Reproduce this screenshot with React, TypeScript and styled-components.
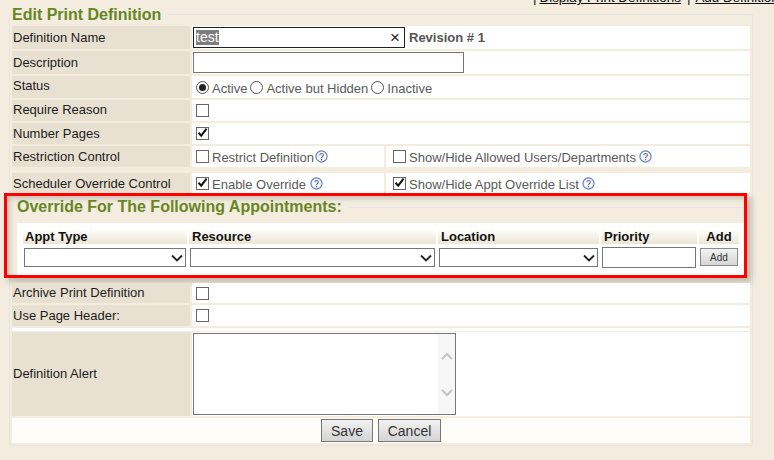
import React from "react";
import styled, { createGlobalStyle } from "styled-components";

const Global = createGlobalStyle`
  html, body { margin: 0; padding: 0; background: #f3ecdf; }
  body { font-family: "Liberation Sans", Arial, sans-serif; font-size: 13px; color: #222; overflow: hidden; }
`;
const Page = styled.div`width: 774px; height: 460px; overflow: hidden;`;
const TopLinks = styled.div`
  height: 14px; display: flex; align-items: flex-end; white-space: nowrap; overflow: hidden;
  padding-left: 533px; font-size: 13.4px; line-height: 14px; color: #111; gap: 1px;
  & > span { position: relative; top: -9px; }
`;
const TopSep = styled.span`margin-right: 2px;`;
const TopLink = styled.span<{ $lead?: number }>`text-decoration: underline; margin: 0 5px 0 ${p => p.$lead ?? 0}px;`;
const Fieldset = styled.div`
  position: relative;
  width: 744px; height: 432px; box-sizing: border-box; margin-left: 9px;
  border: 1px solid #e6e5e0; border-radius: 2px; padding: 11px 2px 0 2px;
`;
const Legend = styled.h1`
  position: absolute; top: -9px; left: 1px; margin: 0; padding: 0 7px 0 1px; background: #f3ecdf;
  font-size: 16px; line-height: 18px; font-weight: bold; color: #66861f;
`;
const Row = styled.div<{ $h: number; $gap?: number }>`
  display: grid; grid-template-columns: 178px 558px; column-gap: 2px;
  height: ${p => p.$h}px; margin-bottom: ${p => p.$gap ?? 2}px;
`;
const Label = styled.div<{ $lift?: number }>`
  background: #e8e1d2; display: flex; align-items: center; padding-left: 1px;
  font-size: 13px; color: #1c1c1c; padding-bottom: ${p => p.$lift ?? 0}px; box-sizing: border-box;
`;
const Value = styled.div`
  background: #fff; display: flex; align-items: center; padding-left: 4px; color: #555; box-sizing: border-box; white-space: nowrap;
`;
const SplitValue = styled.div`
  display: grid; grid-template-columns: 192px 364px; column-gap: 2px;
`;
const SplitCell = styled(Value)<{ $inset?: number }>`padding-left: ${p => p.$inset ?? 4}px;`;
const TextBox = styled.div<{ $w: number; $dark?: boolean }>`
  width: ${p => p.$w}px; height: 21px; box-sizing: border-box; background: #fff;
  border: 1px solid ${p => (p.$dark ? "#222" : "#767676")};
  display: flex; align-items: center; justify-content: space-between; padding: 0 4px 0 2px; margin-left: -3px;
`;
const Selected = styled.span`background: #7d7d7d; color: #fff; line-height: 15px; height: 15px; font-size: 14px;`;
const Clear = styled.span`color: #222; font-size: 17px; line-height: 14px;`;
const Revision = styled.span`font-weight: bold; color: #555; font-size: 13px; margin: 0 0 0 4px;`;
const Opt = styled.span`margin: 2px 3px 0 3px; font-size: 13px; color: #5a5a5a;`;
const RadioCircle = styled.span<{ $on?: boolean }>`
  width: 13px; height: 13px; box-sizing: border-box; border-radius: 50%; border: 1px solid #555; background: #fff;
  display: inline-flex; align-items: center; justify-content: center; flex: none;
  &::after { content: ""; width: 7px; height: 7px; border-radius: 50%; background: ${p => (p.$on ? "#222" : "transparent")}; }
`;
const CheckBox = styled.span`
  width: 13px; height: 13px; box-sizing: border-box; border: 1px solid #666; background: #fff; display: inline-flex; flex: none;
  & svg { display: block; margin: -1px 0 0 0; }
`;
const HelpIcon = styled.svg<{ $gap?: number }>`width: 13px; height: 13px; flex: none; margin-left: ${p => p.$gap ?? 0}px;`;
const Help = ({ gap = 0 }: { gap?: number }) => (
  <HelpIcon viewBox="0 0 13 13" $gap={gap}>
    <circle cx="6.5" cy="6.5" r="5.6" fill="#f4f6fc" stroke="#5b78c0" strokeWidth="1.1" />
    <path d="M4.8 5.2c0-2.2 3.6-2.2 3.6-.1 0 1.4-1.9 1.3-1.9 2.8" fill="none" stroke="#6a6a7a" strokeWidth="1.1" />
    <rect x="6" y="9" width="1.2" height="1.2" fill="#6a6a7a" />
  </HelpIcon>
);
const Check = ({ on }: { on?: boolean }) => (
  <CheckBox>
    {on && (
      <svg width="11" height="11" viewBox="0 0 11 11">
        <path d="M1.5 5.8 4.2 8.6 9.6 1.6" fill="none" stroke="#111" strokeWidth="2" />
      </svg>
    )}
  </CheckBox>
);
const Panel = styled.section`
  box-sizing: border-box; width: 743px; height: 85px; margin: 0 0 5px -8px; border: 3px solid #f00;
  background: #f3ecdf; box-shadow: 4px 4px 6px rgba(90, 85, 70, 0.35), inset 3px 3px 4px rgba(90, 85, 70, 0.25);
  display: flex; flex-direction: column; padding: 0 0 0 10px;
`;
const PanelHead = styled.div`
  display: flex; align-items: center; height: 21px; gap: 7px; flex: none; margin-bottom: 6px; padding-top: 1px; box-sizing: border-box;
`;
const PanelTitle = styled.h2`margin: 0; font-size: 16px; font-weight: bold; color: #66861f; white-space: nowrap;`;
const Rule = styled.div`flex: 1; height: 1px; background: #e6e5e0;`;
const PanelTable = styled.div`
  flex: 1; background: #fff; padding: 6px 5px 0 6px;
  display: grid; grid-template-columns: 164px 247px 161px 96px 40px; column-gap: 2px; grid-template-rows: 15px 21px; row-gap: 4px;
  align-content: start;
`;
const Th = styled.div<{ $pad?: number; $center?: boolean }>`
  background: linear-gradient(#fff, #ece5d3); font-weight: bold; font-size: 13px; color: #111;
  display: flex; align-items: center; padding-left: ${p => p.$pad ?? 3}px; box-sizing: border-box;
  justify-content: ${p => (p.$center ? "center" : "flex-start")};
`;
const SelectBox = styled.div`
  box-sizing: border-box; height: 19px; border: 1px solid #767676; background: #fff; margin: 0 1px;
  display: flex; align-items: center; justify-content: flex-end; padding-right: 2px;
`;
const Chevron = () => (
  <svg width="12" height="8" viewBox="0 0 12 8">
    <path d="M1 1.5 6 6.5 11 1.5" fill="none" stroke="#222" strokeWidth="1.8" />
  </svg>
);
const PriorityBox = styled.div`box-sizing: border-box; height: 21px; margin: -1px 0 0 1px; width: 94px; border: 1px solid #767676; background: #fff;`;
const SmallBtn = styled.button`
  box-sizing: border-box; height: 18px; width: 38px; padding: 0; border: 1px solid #8a8a8a; margin-left: 1px;
  background: linear-gradient(#f2f2f2, #d6d6d6); font: 10px "Liberation Sans", Arial, sans-serif; color: #333;
`;
const AlertBox = styled.div`
  margin: 1px 0 0 -3px; width: 263px; height: 82px; box-sizing: border-box; border: 1px solid #767676; background: #fff;
  display: flex; justify-content: flex-end;
`;
const ScrollTrack = styled.div`
  width: 17px; background: #f7f7f7; display: flex; flex-direction: column; align-items: center; padding-top: 18px; gap: 29px;
`;
const AlertRow = styled(Row)`& > div:last-child { align-items: flex-start; }`;
const Divider = styled.div`height: 3px; background: #fff; width: 738px; margin-bottom: 1px;`;
const Footer = styled.div`
  height: 25px; background: #fffdfa; width: 738px; margin-top: 2px; display: flex; justify-content: flex-start; padding: 1px 0 0 309px; box-sizing: border-box; gap: 5px;
`;
const Btn = styled.button<{ $w: number }>`
  box-sizing: border-box; width: ${p => p.$w}px; height: 23px; padding: 0; border: 1px solid #777;
  background: linear-gradient(#f2f2f2, #d4d4d4); font: 14px "Liberation Sans", Arial, sans-serif; color: #333;
`;
const Arrow = ({ up }: { up?: boolean }) => (
  <svg width="12" height="8" viewBox="0 0 12 8">
    <path d={up ? "M1 7 6 2 11 7" : "M1 1 6 6 11 1"} fill="none" stroke="#c4c4c4" strokeWidth="2" />
  </svg>
);

export default function App() {
  return (
    <Page>
      <Global />
      <TopLinks>
        <TopSep>|</TopSep>
        <TopLink>Display Print Definitions</TopLink>
        <TopSep>|</TopSep>
        <TopLink $lead={2}>Add Definition</TopLink>
      </TopLinks>
      <Fieldset>
        <Legend>Edit Print Definition</Legend>
        <Row $h={23}>
          <Label>Definition Name</Label>
          <Value>
            <TextBox $w={212} $dark><Selected>test</Selected><Clear>×</Clear></TextBox>
            <Revision>Revision # 1</Revision>
          </Value>
        </Row>
        <Row $h={23}>
          <Label>Description</Label>
          <Value><TextBox $w={271} /></Value>
        </Row>
        <Row $h={22}>
          <Label $lift={3}>Status</Label>
          <Value>
            <RadioCircle $on /><Opt>Active</Opt>
            <RadioCircle /><Opt>Active but Hidden</Opt>
            <RadioCircle /><Opt>Inactive</Opt>
          </Value>
        </Row>
        <Row $h={21}><Label $lift={2}>Require Reason</Label><Value><Check /></Value></Row>
        <Row $h={21}><Label>Number Pages</Label><Value><Check on /></Value></Row>
        <Row $h={21} $gap={6}>
          <Label>Restriction Control</Label>
          <SplitValue>
            <SplitCell><Check /><Opt>Restrict Definition</Opt><Help gap={-2} /></SplitCell>
            <SplitCell $inset={7}><Check /><Opt>Show/Hide Allowed Users/Departments</Opt><Help /></SplitCell>
          </SplitValue>
        </Row>
        <Row $h={20} $gap={0}>
          <Label>Scheduler Override Control</Label>
          <SplitValue>
            <SplitCell><Check on /><Opt>Enable Override</Opt><Help gap={1} /></SplitCell>
            <SplitCell $inset={7}><Check on /><Opt>Show/Hide Appt Override List</Opt><Help /></SplitCell>
          </SplitValue>
        </Row>
        <Panel>
          <PanelHead>
            <PanelTitle>Override For The Following Appointments:</PanelTitle>
            <Rule />
          </PanelHead>
          <PanelTable>
            <Th $pad={2}>Appt Type</Th><Th>Resource</Th><Th>Location</Th><Th>Priority</Th><Th $pad={0} $center>Add</Th>
            <SelectBox><Chevron /></SelectBox>
            <SelectBox><Chevron /></SelectBox>
            <SelectBox><Chevron /></SelectBox>
            <PriorityBox />
            <SmallBtn>Add</SmallBtn>
          </PanelTable>
        </Panel>
        <Row $h={20}><Label $lift={1}>Archive Print Definition</Label><Value><Check /></Value></Row>
        <Row $h={21}><Label>Use Page Header:</Label><Value><Check /></Value></Row>
        <Divider />
        <AlertRow $h={84} $gap={0}>
          <Label $lift={2}>Definition Alert</Label>
          <Value>
            <AlertBox>
              <ScrollTrack><Arrow up /><Arrow /></ScrollTrack>
            </AlertBox>
          </Value>
        </AlertRow>
        <Footer>
          <Btn $w={52}>Save</Btn>
          <Btn $w={63}>Cancel</Btn>
        </Footer>
      </Fieldset>
    </Page>
  );
}
